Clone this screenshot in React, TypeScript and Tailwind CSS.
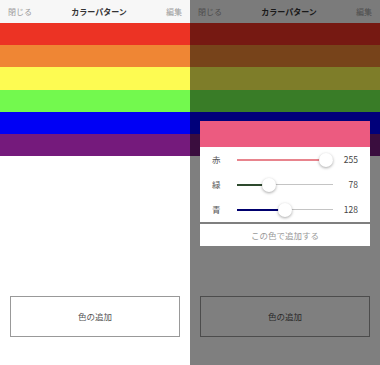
const stripes = ["#ec3324", "#ef8634", "#fdfb52", "#73f94e", "#0000f5", "#751a7c"];

const font = { fontFamily: '"Noto Sans CJK JP", "Noto Sans", sans-serif' };

function Screen({ dim }: { dim?: boolean }) {
  return (
    <div className="relative flex h-[365px] w-[190px] flex-col bg-white">
      <header className="flex h-[23px] items-center justify-between bg-[#f7f7f7] px-2 text-[8px]">
        <span className="text-[#9a9a9a]">閉じる</span>
        <span className="font-bold text-[#333]">カラーパターン</span>
        <span className="text-[#9a9a9a]">編集</span>
      </header>
      <div className="flex flex-col">
        {stripes.map((c) => (
          <div key={c} className="h-[22.2px]" style={{ backgroundColor: c }} />
        ))}
      </div>
      <div className="flex-1" />
      <button className="mx-[10px] mb-[28px] flex h-[41px] items-center justify-center border border-[#999] bg-white text-[8.5px] text-[#555]">
        色の追加
      </button>
      {dim && <div className="absolute inset-0 bg-black/50" />}
    </div>
  );
}

const sliders = [
  { label: "赤", value: 255, fill: "#e8848d" },
  { label: "緑", value: 78, fill: "#2e4a2e" },
  { label: "青", value: 128, fill: "#00006e" },
];

function Slider({ value, fill }: { value: number; fill: string }) {
  const pos = 7 + (value / 255) * 82;
  return (
    <div className="relative h-[14px] w-[96px]">
      <div className="absolute left-0 right-0 top-[6.5px] h-px bg-[#c4c4c4]" />
      <div className="absolute left-0 top-[6px] h-[2px]" style={{ width: pos, backgroundColor: fill }} />
      <div
        className="absolute top-0 h-[14px] w-[14px] -translate-x-1/2 rounded-full bg-white shadow-[0_1px_3px_rgba(0,0,0,0.35)]"
        style={{ left: pos }}
      />
    </div>
  );
}

export default function App() {
  return (
    <div className="flex h-[365px] w-[380px] overflow-hidden" style={font}>
      <Screen />
      <div className="relative">
        <Screen dim />
        <div className="absolute left-[10px] top-[121px] flex w-[170px] flex-col gap-[2px]">
          <div className="flex flex-col bg-white">
            <div className="h-[26px] bg-[#ec5b80]" />
            {sliders.map((s) => (
              <div key={s.label} className="flex h-[25px] items-center pl-[12px] pr-[12px]">
                <span className="w-[24.7px] text-[8.5px] text-[#555]">{s.label}</span>
                <Slider value={s.value} fill={s.fill} />
                <span className="flex-1 text-right text-[8.5px] text-[#444]">{s.value}</span>
              </div>
            ))}
          </div>
          <button className="flex h-[22px] items-center justify-center bg-white text-[8.5px] text-[#999]">
            この色で追加する
          </button>
        </div>
      </div>
    </div>
  );
}
